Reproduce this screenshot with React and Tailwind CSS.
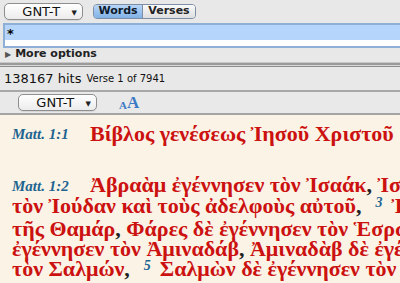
import React from 'react';

const ui = { fontFamily: '"DejaVu Sans", "Liberation Sans", sans-serif' };
const greek = { fontFamily: '"Liberation Serif", "DejaVu Serif", serif' };

const Dropdown = ({ className = '' }) => (
  <div
    className={`flex items-center justify-between h-[17px] rounded-[5px] border border-[#8e8e8e] bg-gradient-to-b from-white to-[#ececec] shadow-[0_1px_0_rgba(0,0,0,0.08)] ${className}`}
  >
    <span className="flex-1 text-center text-[13px] leading-none text-[#111] pl-[6px]">GNT-T</span>
    <span className="text-[7px] leading-none text-[#222] pr-[5px] pt-[4px]">▼</span>
  </div>
);

const Ref = ({ children }) => (
  <span className="inline-block w-[78px] text-[15px] italic font-bold text-[#1d6491] align-[1px]" style={greek}>
    {children}
  </span>
);

const C = () => <span className="text-[#222]">,</span>;

const Sup = ({ n }) => (
  <span className="relative -top-[6px] text-[14px] italic font-bold text-[#1d6491] pl-[14px] pr-[9px]">{n}</span>
);

export default function App() {
  return (
    <div className="w-[400px] h-[283px] overflow-hidden bg-[#e8e8e8] flex flex-col" style={ui}>
      {/* top toolbar */}
      <div className="h-[23px] flex items-center pl-[4px] gap-[10px]">
        <Dropdown className="w-[79px]" />
        <div className="flex h-[15px] rounded-[4px] border border-[#7d8ea5] overflow-hidden text-[11px] font-semibold">
          <div className="w-[49px] flex items-center justify-center bg-gradient-to-b from-[#b9d6f6] to-[#80b1e6] text-[#0d1a2b] border-r border-[#7d8ea5]">
            Words
          </div>
          <div className="w-[52px] flex items-center justify-center bg-gradient-to-b from-[#fafafa] to-[#dedede] text-[#222]">
            Verses
          </div>
        </div>
      </div>

      {/* search field */}
      <div className="ml-[3px] h-[25px] border-y-[2px] border-l-[2px] border-[#8eb0d6] bg-white flex flex-col">
        <div className="h-[15px] bg-[#b5d5fd] text-[13px] font-bold leading-[17px] pl-[2px] text-black">*</div>
      </div>

      {/* more options */}
      <div className="h-[13px] flex items-center pl-[5px] gap-[4px]">
        <span className="text-[8px] text-[#555] leading-none">▶</span>
        <span className="text-[11px] font-bold text-[#222]">More options</span>
      </div>

      <div className="mt-[1px] h-[1px] bg-[#c8c8c8]" />
      <div className="h-[2px] bg-[#9a9a9a]" />
      <div className="h-[1px] bg-[#d8d8d8]" />
      <div className="h-[1px] bg-[#8c8c8c]" />

      {/* hits */}
      <div className="h-[23px] flex items-center pl-[4px] gap-[5px] text-[#111]">
        <span className="text-[13px]">138167 hits</span>
        <span className="text-[10px]">Verse 1 of 7941</span>
      </div>
      <div className="h-[2px] bg-[#a8a8a8]" />

      {/* second toolbar */}
      <div className="h-[21px] flex items-center pl-[18px] gap-[22px] bg-[#e9e9e9]">
        <Dropdown className="w-[79px]" />
        <div className="flex items-end leading-none font-bold text-[#3d7ac6]" style={greek}>
          <span className="text-[11px]">A</span>
          <span className="text-[17px]">A</span>
        </div>
      </div>
      <div className="h-[2px] bg-[#a4a4a4]" />

      {/* text */}
      <div className="flex-1 bg-[#fbf3e5] pl-[12px] pt-[8px] overflow-hidden whitespace-nowrap font-bold text-[#cc1111] text-[22px] leading-[20px]" style={greek}>
        <div className="h-[22px] flex items-center">
          <Ref>Matt. 1:1</Ref>
          <span className="text-[22px]">Βίβλος γενέσεως Ἰησοῦ Χριστοῦ</span>
        </div>
        <div className="h-[30px]" />
        <div>
          <Ref>Matt. 1:2</Ref>
          <span>Ἀβραὰμ ἐγέννησεν τὸν Ἰσαάκ<C /> Ἰσαὰκ δὲ ἐγέννησεν</span>
        </div>
        <div>
          τὸν Ἰούδαν καὶ τοὺς ἀδελφοὺς αὐτοῦ<C /><Sup n="3" />Ἰούδας δὲ
        </div>
        <div>
          τῆς Θαμάρ<C /> Φάρες δὲ ἐγέννησεν τὸν Ἑσρώμ<C />
        </div>
        <div>
          ἐγέννησεν τὸν Ἀμιναδάβ<C /> Ἀμιναδὰβ δὲ ἐγέννησεν
        </div>
        <div>
          τὸν Σαλμών<C /><Sup n="5" />Σαλμὼν δὲ ἐγέννησεν τὸν Βόες
        </div>
      </div>
    </div>
  );
}
